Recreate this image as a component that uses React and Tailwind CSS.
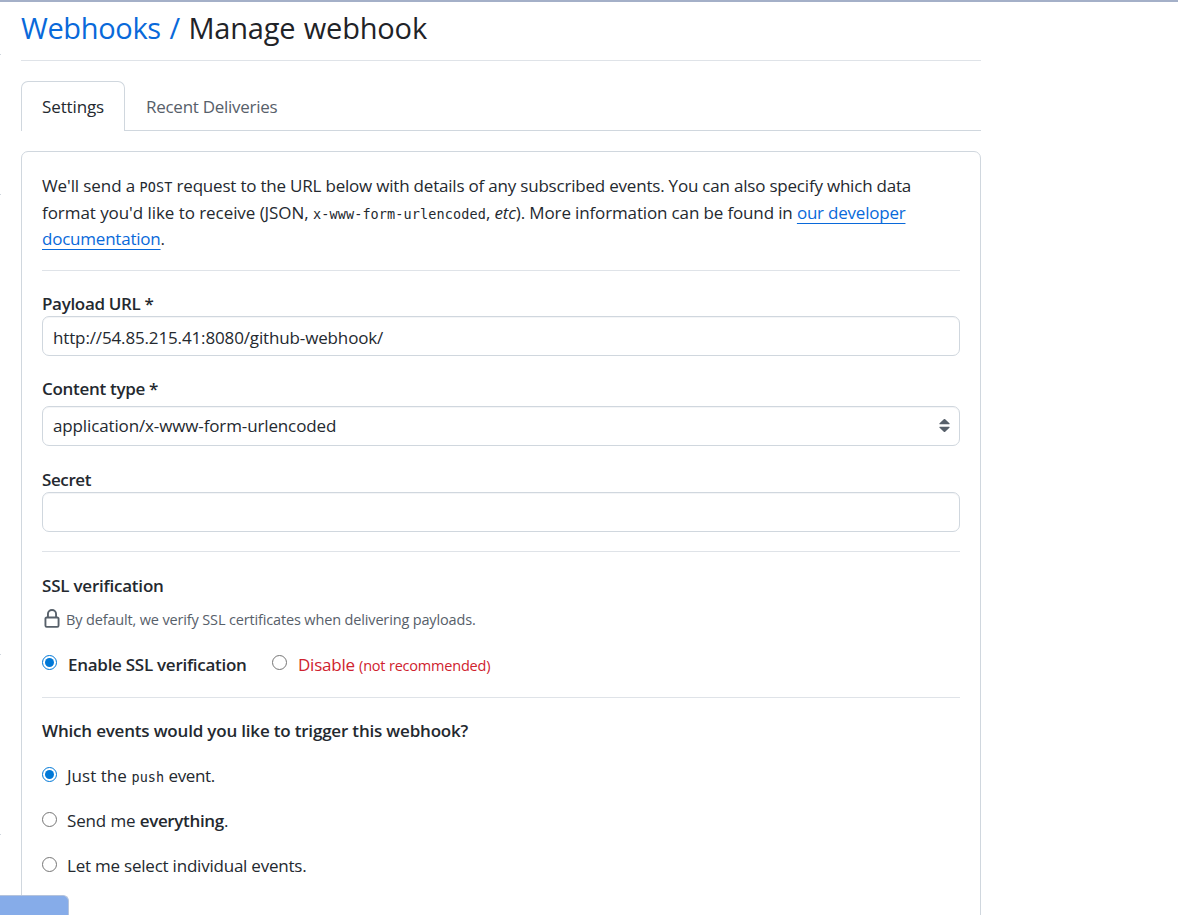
import React from "react";

function Radio({ checked }) {
  return (
    <span
      role="radio"
      aria-checked={!!checked}
      className={
        checked
          ? "flex size-[15px] shrink-0 items-center justify-center rounded-full border border-[#0078d7] bg-white"
          : "flex size-[15px] shrink-0 items-center justify-center rounded-full border border-[#767676] bg-white"
      }
    >
      {checked && <span className="size-[9px] rounded-full bg-[#0078d7]" />}
    </span>
  );
}

function Code({ children }) {
  return (
    <code className="font-['DejaVu_Sans_Mono',monospace] text-[13.5px] tracking-[0.11px]">{children}</code>
  );
}

function Divider() {
  return <div className="h-px bg-[#dfe3e8]" />;
}

export default function App() {
  return (
    <div className="relative h-[915px] w-full overflow-hidden whitespace-pre border-t-2 border-[#a4b0c8] bg-white font-['Open_Sans','Noto_Sans',sans-serif] text-[17px] tracking-[-0.22px] text-[#24292f]">
      <div className="ml-[21px] flex w-[960px] flex-col">
        <h1 className="h-[58px] text-[29px] leading-[52px] tracking-[-0.2px] text-[#1f2328]">
          <a className="tracking-[-0.35px] text-[#0969da] [word-spacing:1.5px]">Webhooks / </a>
          <span className="tracking-[-0.18px] [word-spacing:1px]">Manage webhook</span>
        </h1>
        <Divider />

        <nav className="mt-5 flex h-[50px]">
          <div className="w-[104px] rounded-t-[7px] border border-b-0 border-[#d0d7de] pl-5 leading-[50px]">
            <span className="tracking-[-0.12px]">Settings</span>
          </div>
          <div className="flex-1 border-b border-[#d0d7de] pl-[21px] leading-[52px] text-[#57606a]">
            <span className="tracking-[-0.27px]">Recent Deliveries</span>
          </div>
        </nav>

        <main className="mt-5 h-[800px] rounded-[7px] border border-[#d0d7de] px-5 pt-5">
          <div className="h-[98px]">
            <p className="h-[27px] leading-[28px]">
              <span className="tracking-[-0.1px]">We'll send a </span><Code>POST</Code>
              <span className="tracking-[-0.205px]"> request to the URL below with details of any subscribed events. You can also specify which data</span>
            </p>
            <p className="h-[26px] leading-[28px]">
              <span className="tracking-[-0.06px]">format you'd like to receive (JSON, </span><Code>x-www-form-urlencoded</Code>
              <span className="tracking-[-0.14px]">, <em>etc</em>). More information can be found in </span>
              <a className="text-[#0969da] underline decoration-1 underline-offset-[4px]">our developer</a>
            </p>
            <p className="h-[27px] leading-[28px]">
              <a className="text-[#0969da] underline decoration-1 underline-offset-[4px]">documentation</a>.
            </p>
          </div>
          <Divider />

          <div className="mt-5 h-[25px] font-semibold leading-[26px]">
            <span className="tracking-[-0.33px]">Payload URL *</span>
          </div>
          <div className="flex h-10 items-center rounded-[7px] border border-[#d0d7de] pl-2.5 pt-[3px] shadow-[inset_0_1px_0_#f4f5f7]">
            <span className="tracking-[-0.14px]">http://54.85.215.41:8080/github-webhook/</span>
          </div>

          <div className="mt-5 h-[30px] font-semibold leading-[26px]">
            <span className="tracking-[-0.3px]">Content type *</span>
          </div>
          <div className="flex h-10 items-center justify-between rounded-[7px] border border-[#d0d7de] pl-2.5 pr-[9px] shadow-[inset_0_1px_0_#f4f5f7]">
            <span className="tracking-[-0.13px]">application/x-www-form-urlencoded</span>
            <svg className="-mt-px" width="11" height="13" viewBox="0 0 11 13" fill="#57606a">
              <path d="M4.8.3a1 1 0 0 1 1.4 0l4.2 4a.55.55 0 0 1-.4 1H1a.55.55 0 0 1-.4-1ZM4.8 12.7a1 1 0 0 0 1.4 0l4.2-4a.55.55 0 0 0-.4-1H1a.55.55 0 0 0-.4 1Z" />
            </svg>
          </div>

          <div className="mt-5 h-[26px] font-semibold leading-[28px]">
            <span className="tracking-[-0.4px]">Secret</span>
          </div>
          <div className="mb-[19px] h-10 rounded-[7px] border border-[#d0d7de] shadow-[inset_0_1px_0_#f4f5f7]" />
          <Divider />

          <div className="mt-5 h-[28px] font-semibold leading-[28px]">
            <span>SSL verification</span>
          </div>
          <div className="mt-[7px] flex h-[26px] items-center text-[14.5px] text-[#57606a]">
            <svg className="-mt-[2px] mr-1" width="20" height="20" viewBox="0 0 16 16" fill="#57606a">
              <path d="M4 4a4 4 0 0 1 8 0v2h.25c.966 0 1.75.784 1.75 1.75v5.5A1.75 1.75 0 0 1 12.25 15h-8.5A1.75 1.75 0 0 1 2 13.25v-5.5C2 6.784 2.784 6 3.75 6H4Zm8.25 3.5h-8.5a.25.25 0 0 0-.25.25v5.5c0 .138.112.25.25.25h8.5a.25.25 0 0 0 .25-.25v-5.5a.25.25 0 0 0-.25-.25ZM10.5 6V4a2.5 2.5 0 1 0-5 0v2Z" />
            </svg>
            <span className="tracking-[-0.15px]">By default, we verify SSL certificates when delivering payloads.</span>
          </div>
          <div className="mb-[21px] mt-[18px] flex h-[25px] gap-[25px]">
            <label className="flex w-[205px] gap-[11px]">
              <span className="mt-[4px]"><Radio checked /></span>
              <span className="font-semibold leading-[28px] tracking-[-0.27px]">Enable SSL verification</span>
            </label>
            <label className="flex gap-[11px] text-[#cf222e]">
              <span className="mt-[4px]"><Radio /></span>
              <span className="leading-[28px]">
                <span className="tracking-[-0.22px]">Disable </span><span className="text-[14.5px] tracking-[-0.2px]">(not recommended)</span>
              </span>
            </label>
          </div>
          <Divider />

          <div className="mt-5 h-[28px] font-semibold leading-[25px]">
            <span className="tracking-[-0.19px]">Which events would you like to trigger this webhook?</span>
          </div>
          <div className="mt-[17px] flex flex-col">
            <label className="flex h-[45px] gap-2.5">
              <span className="mt-[4px]"><Radio checked /></span>
              <span className="leading-[25px]"><span className="tracking-[0.04px]">Just the </span><Code>push</Code><span className="tracking-[-0.33px]"> event.</span></span>
            </label>
            <label className="flex h-[45px] gap-2.5">
              <span className="mt-[4px]"><Radio /></span>
              <span className="leading-[25px]"><span className="tracking-[-0.14px]">Send me </span><strong className="font-semibold tracking-[-0.34px]">everything</strong>.</span>
            </label>
            <label className="flex h-[45px] gap-2.5">
              <span className="mt-[4px]"><Radio /></span>
              <span className="leading-[25px]">Let me select individual events.</span>
            </label>
          </div>
        </main>
      </div>

      <div className="absolute left-0 top-[52px] h-px w-px bg-[#d0d7de]" />
      <div className="absolute left-0 top-[192px] h-px w-px bg-[#d0d7de]" />
      <div className="absolute left-0 top-[652px] h-px w-px bg-[#d0d7de]" />
      <div className="absolute left-0 top-[832px] h-px w-px bg-[#d0d7de]" />
      <div className="absolute left-0 top-[893px] h-[22px] w-[69px] rounded-tr-[6px] border-r border-t border-[#b4c3dc] bg-[#86ace9]" />
    </div>
  );
}
